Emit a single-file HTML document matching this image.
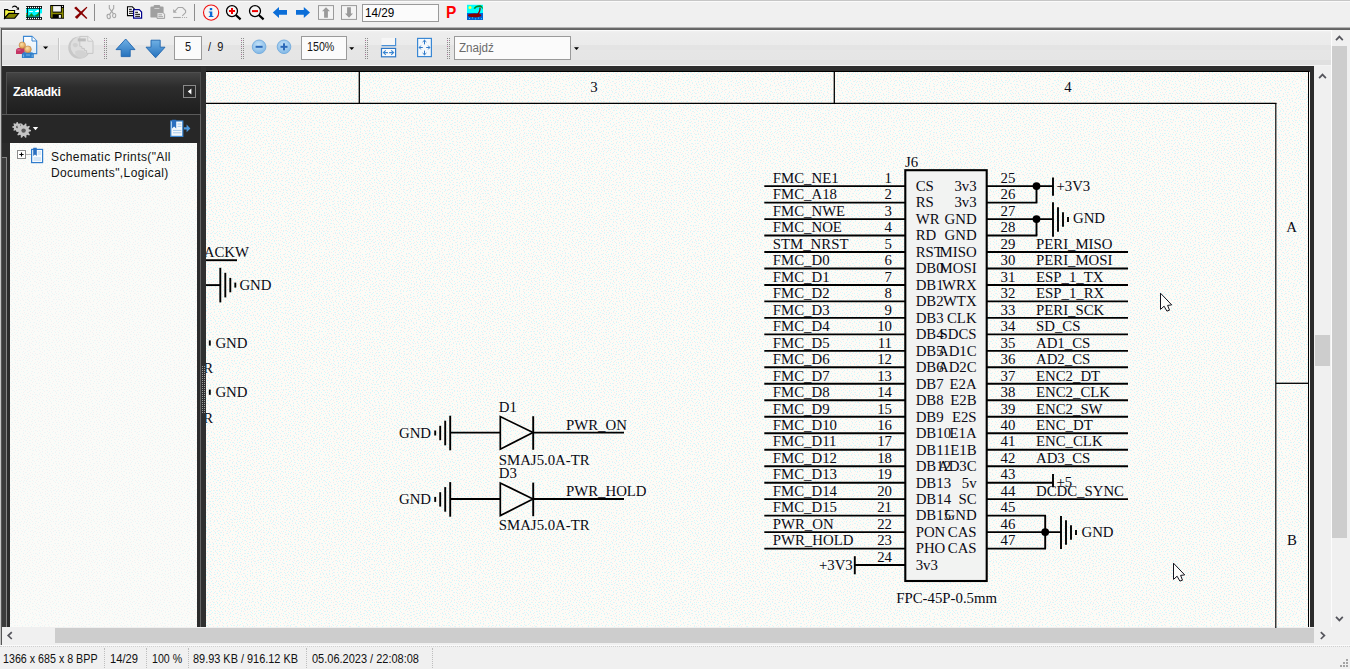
<!DOCTYPE html>
<html lang="pl">
<head>
<meta charset="utf-8">
<title>IrfanView - PDF schematic</title>
<style>
html,body{margin:0;padding:0;}
body{width:1350px;height:669px;overflow:hidden;position:relative;background:#f0f0f0;font-family:"Liberation Sans",sans-serif;}
.abs{position:absolute;}
#tb1{left:0;top:0;width:1350px;height:27px;background:linear-gradient(#c6c6c6 0,#c6c6c6 1px,#fafafa 1px,#fafafa 2px,#f0f0f0 2px);}
#tb1sep{left:0;top:27px;width:1350px;height:3px;background:linear-gradient(#b4b4b4 0,#b4b4b4 30%,#6c6c6c 40%,#606060 100%);}
#tb1sep2{left:2px;top:30px;width:1329px;height:1px;background:#fbfbfb;}
#tb2{left:2px;top:31px;width:1329px;height:35px;background:linear-gradient(#f1f1f1 0px,#ededed 2px,#ebebeb 14px,#e4e4e4 14.5px,#e4e4e4 18.5px,#e6e6e6 19px,#e5e5e5 29px,#e0e0e0 29.5px,#e0e0e0 34px,#f4f4f4 34px,#f4f4f4 35px);}
#lborder{left:0;top:28px;width:2px;height:617px;background:linear-gradient(90deg,#c4c4c4 0,#c4c4c4 50%,#555 50%,#555 100%);}
#dark{left:2px;top:66px;width:1312px;height:561px;background:#2b2b2b;}
#page{left:206px;top:72px;width:1102px;height:555px;background:#f7f9f6;}
#pageedge{left:1308px;top:71px;width:1px;height:556px;background:#000;}
#pageedge2{left:1309px;top:72px;width:1px;height:555px;background:#f4f4f4;}
#pagetop{left:206px;top:71px;width:1103px;height:1px;background:#000;}
/* bookmarks panel */
#bmhead{left:6px;top:72px;width:195px;height:42px;box-sizing:border-box;border:1px solid #4f4f4f;border-bottom:none;background:linear-gradient(#444 0%,#2c2c2c 35%,#1e1e1e 100%);}
#bmtitle{left:13px;top:85px;color:#fff;font-weight:bold;font-size:12.5px;line-height:15px;letter-spacing:-0.3px;}
#bmcollapse{left:183px;top:85px;width:13px;height:13px;box-sizing:border-box;border:1px solid #8a8a8a;background:#2a2a2a;}
#bmtools{left:2px;top:114px;width:199px;height:29px;background:#272727;border-top:1px solid #5a5a5a;box-sizing:border-box;}
#bmtree{left:10px;top:143px;width:187px;height:484px;background:#f8f9f7;}
#bmrline{left:200px;top:114px;width:1px;height:513px;background:#666;}
#bmleftline{left:2px;top:157px;width:4px;height:469px;background:#3b3b3b;border-top:1px solid #858585;border-right:1px solid #858585;}
.tree{color:#111;font-size:12px;line-height:16px;letter-spacing:0.39px;white-space:nowrap;}
/* scrollbars */
#vs_in{left:1314px;top:67px;width:17px;height:560px;background:#f0f0f0;}
#vs_in_thumb{left:1315px;top:335px;width:15px;height:31px;background:#cdcdcd;}
#vs_gap{left:1331px;top:30px;width:1px;height:597px;background:#fcfcfc;}
#vs_out{left:1332px;top:30px;width:18px;height:597px;background:#f0f0f0;}
#vs_out_thumb{left:1332px;top:46px;width:15px;height:492px;background:#cdcdcd;}
#hs{left:2px;top:627px;width:1348px;height:18px;background:#f0f0f0;}
#hs_thumb{left:55px;top:628px;width:1259px;height:15px;background:#cdcdcd;}
/* status */
#status{left:0;top:645px;width:1350px;height:24px;background:#f0f0f0;border-top:1px solid #fafafa;box-sizing:border-box;}
#statusdot{left:0;top:646px;width:1350px;height:0;border-top:1px dotted #cfcfcf;}
.st{position:absolute;transform-origin:0 0;top:651.8px;font-size:12px;line-height:14px;color:#111;white-space:nowrap;}
.ss{position:absolute;top:648px;width:0;height:20px;border-left:1px dotted #bdbdbd;}
.tbox{position:absolute;box-sizing:border-box;background:#fbfbfb;border:1px solid #9a9a9a;}
.t2{position:absolute;font-size:12.5px;color:#151515;line-height:14px;white-space:nowrap;}
</style>
</head>
<body>
<div class="abs" id="tb1"></div>
<div class="abs" id="tb1sep"></div>
<div class="abs" id="tb1sep2"></div>
<div class="abs" id="tb2"></div>
<div class="abs" id="lborder"></div>
<div class="abs" id="dark"></div>
<div class="abs" id="page"></div>
<div class="abs" id="pagetop"></div>
<div class="abs" id="pageedge"></div>
<div class="abs" id="pageedge2"></div>

<!-- bookmarks panel -->
<div class="abs" id="bmhead"></div>
<div class="abs" id="bmtitle">Zakładki</div>
<div class="abs" id="bmcollapse"></div>
<div class="abs" id="bmtools"></div>
<div class="abs" id="bmtree"></div>
<svg class="abs" style="left:0;top:0;" width="1350" height="669" viewBox="0 0 1350 669">
<defs><pattern id="dcy" width="53" height="53" patternUnits="userSpaceOnUse"><path fill="#cefcff" d="M28 35h1v1h-1zM49 29h1v1h-1zM28 32h1v1h-1zM37 12h1v1h-1zM11 51h1v1h-1zM32 30h1v1h-1zM40 39h1v1h-1zM50 11h1v1h-1zM6 28h1v1h-1zM19 9h1v1h-1zM5 34h1v1h-1zM51 44h1v1h-1zM40 2h1v1h-1zM38 25h1v1h-1zM28 41h1v1h-1zM47 39h1v1h-1zM41 10h1v1h-1zM33 4h1v1h-1zM3 2h1v1h-1zM12 15h1v1h-1zM20 28h1v1h-1zM33 14h1v1h-1zM40 18h1v1h-1zM31 0h1v1h-1zM42 5h1v1h-1zM17 26h1v1h-1zM45 16h1v1h-1zM20 48h1v1h-1zM14 32h1v1h-1zM18 1h1v1h-1zM49 6h1v1h-1zM25 6h1v1h-1zM43 0h1v1h-1zM3 30h1v1h-1zM24 45h1v1h-1zM25 26h1v1h-1zM17 21h1v1h-1zM5 19h1v1h-1zM21 0h1v1h-1zM26 48h1v1h-1zM7 8h1v1h-1zM15 45h1v1h-1zM6 0h1v1h-1zM51 31h1v1h-1zM11 43h1v1h-1zM12 46h1v1h-1zM13 0h1v1h-1zM17 51h1v1h-1zM37 19h1v1h-1zM1 13h1v1h-1zM11 25h1v1h-1zM38 41h1v1h-1zM36 6h1v1h-1zM2 9h1v1h-1zM13 28h1v1h-1zM21 18h1v1h-1zM4 5h1v1h-1zM13 37h1v1h-1zM40 15h1v1h-1zM0 38h1v1h-1zM23 23h1v1h-1zM39 29h1v1h-1zM8 37h1v1h-1zM8 24h1v1h-1zM11 40h1v1h-1zM9 19h1v1h-1zM46 12h1v1h-1zM40 35h1v1h-1zM24 30h1v1h-1zM26 3h1v1h-1zM16 15h1v1h-1zM47 45h1v1h-1zM25 16h1v1h-1zM26 52h1v1h-1zM18 33h1v1h-1zM35 41h1v1h-1zM47 1h1v1h-1zM15 3h1v1h-1zM33 36h1v1h-1zM8 5h1v1h-1zM23 8h1v1h-1zM28 21h1v1h-1zM42 46h1v1h-1zM44 33h1v1h-1zM37 2h1v1h-1zM30 4h1v1h-1zM46 19h1v1h-1zM2 47h1v1h-1zM8 50h1v1h-1zM5 43h1v1h-1zM40 7h1v1h-1zM44 37h1v1h-1zM29 28h1v1h-1zM48 32h1v1h-1zM1 19h1v1h-1zM7 31h1v1h-1zM42 31h1v1h-1zM33 10h1v1h-1zM48 21h1v1h-1zM42 28h1v1h-1zM20 25h1v1h-1zM51 48h1v1h-1zM13 8h1v1h-1zM45 4h1v1h-1zM10 7h1v1h-1zM31 43h1v1h-1zM20 45h1v1h-1zM20 4h1v1h-1zM17 36h1v1h-1zM41 50h1v1h-1zM49 17h1v1h-1zM15 49h1v1h-1zM3 40h1v1h-1zM6 40h1v1h-1zM23 4h1v1h-1zM43 12h1v1h-1zM30 16h1v1h-1zM22 34h1v1h-1zM32 39h1v1h-1zM46 24h1v1h-1zM29 12h1v1h-1zM32 50h1v1h-1zM52 21h1v1h-1zM6 46h1v1h-1zM52 51h1v1h-1zM7 13h1v1h-1zM15 24h1v1h-1zM35 26h1v1h-1zM51 2h1v1h-1zM11 34h1v1h-1zM30 9h1v1h-1zM33 46h1v1h-1zM48 14h1v1h-1zM46 35h1v1h-1zM35 16h1v1h-1zM19 42h1v1h-1zM24 39h1v1h-1zM13 19h1v1h-1zM36 31h1v1h-1zM1 34h1v1h-1zM25 34h1v1h-1zM51 36h1v1h-1zM33 20h1v1h-1zM1 16h1v1h-1zM8 44h1v1h-1zM15 39h1v1h-1zM1 24h1v1h-1zM22 11h1v1h-1zM20 38h1v1h-1zM5 16h1v1h-1zM45 8h1v1h-1zM40 43h1v1h-1zM39 32h1v1h-1zM13 11h1v1h-1zM17 7h1v1h-1zM23 49h1v1h-1zM11 4h1v1h-1zM42 25h1v1h-1zM51 41h1v1h-1zM10 31h1v1h-1zM18 30h1v1h-1zM1 0h1v1h-1zM3 37h1v1h-1zM4 51h1v1h-1zM46 30h1v1h-1zM38 45h1v1h-1zM52 8h1v1h-1zM39 22h1v1h-1zM21 21h1v1h-1zM35 48h1v1h-1zM36 36h1v1h-1zM22 42h1v1h-1zM20 14h1v1h-1zM5 23h1v1h-1zM36 23h1v1h-1zM51 24h1v1h-1zM17 47h1v1h-1zM29 25h1v1h-1zM42 22h1v1h-1zM33 23h1v1h-1zM9 15h1v1h-1zM30 19h1v1h-1zM11 22h1v1h-1zM25 11h1v1h-1zM28 50h1v1h-1zM47 50h1v1h-1zM16 12h1v1h-1zM30 46h1v1h-1zM15 42h1v1h-1zM38 9h1v1h-1zM10 11h1v1h-1zM48 42h1v1h-1zM33 33h1v1h-1zM9 2h1v1h-1zM1 4h1v1h-1zM2 44h1v1h-1zM44 42h1v1h-1zM38 50h1v1h-1zM9 47h1v1h-1zM45 48h1v1h-1zM35 51h1v1h-1zM24 20h1v1h-1zM4 13h1v1h-1zM35 44h1v1h-1zM51 27h1v1h-1zM26 23h1v1h-1zM28 7h1v1h-1zM26 37h1v1h-1zM2 27h1v1h-1zM27 44h1v1h-1zM21 31h1v1h-1zM9 28h1v1h-1zM18 18h1v1h-1zM7 21h1v1h-1zM47 27h1v1h-1zM51 14h1v1h-1zM29 38h1v1h-1zM32 26h1v1h-1zM8 34h1v1h-1zM43 19h1v1h-1zM0 29h1v1h-1zM34 1h1v1h-1zM49 52h1v1h-1zM25 42h1v1h-1zM24 1h1v1h-1zM27 14h1v1h-1zM48 9h1v1h-1zM23 14h1v1h-1zM33 7h1v1h-1zM5 10h1v1h-1zM28 1h1v1h-1zM6 3h1v1h-1zM27 18h1v1h-1zM3 21h1v1h-1z"/></pattern><pattern id="dgr" width="41" height="41" patternUnits="userSpaceOnUse"><path fill="#efedf0" d="M40 23h1v1h-1zM20 16h1v1h-1zM14 31h1v1h-1zM4 9h1v1h-1zM8 19h1v1h-1zM4 2h1v1h-1zM23 23h1v1h-1zM4 13h1v1h-1zM35 20h1v1h-1zM1 20h1v1h-1zM19 30h1v1h-1zM32 25h1v1h-1zM6 39h1v1h-1zM24 6h1v1h-1zM23 34h1v1h-1zM5 15h1v1h-1zM23 31h1v1h-1zM30 24h1v1h-1zM40 1h1v1h-1zM12 36h1v1h-1zM2 31h1v1h-1zM25 27h1v1h-1zM20 36h1v1h-1zM8 3h1v1h-1zM14 1h1v1h-1zM32 29h1v1h-1zM11 2h1v1h-1zM24 17h1v1h-1zM27 12h1v1h-1zM40 36h1v1h-1zM32 6h1v1h-1zM38 30h1v1h-1zM8 11h1v1h-1zM21 0h1v1h-1zM5 18h1v1h-1zM21 8h1v1h-1zM30 35h1v1h-1zM15 18h1v1h-1zM15 6h1v1h-1zM34 10h1v1h-1zM31 11h1v1h-1zM25 38h1v1h-1zM7 27h1v1h-1zM35 31h1v1h-1zM5 28h1v1h-1zM38 10h1v1h-1zM37 8h1v1h-1zM27 32h1v1h-1zM30 19h1v1h-1zM12 21h1v1h-1zM20 5h1v1h-1zM33 40h1v1h-1zM29 17h1v1h-1zM12 39h1v1h-1zM17 38h1v1h-1zM27 23h1v1h-1zM28 26h1v1h-1zM14 10h1v1h-1zM18 17h1v1h-1zM3 22h1v1h-1zM15 34h1v1h-1zM40 11h1v1h-1zM37 33h1v1h-1zM26 34h1v1h-1zM0 16h1v1h-1zM3 26h1v1h-1zM27 28h1v1h-1zM29 7h1v1h-1zM29 30h1v1h-1zM8 30h1v1h-1zM32 2h1v1h-1zM7 13h1v1h-1zM38 37h1v1h-1zM18 12h1v1h-1zM33 17h1v1h-1zM36 14h1v1h-1zM10 37h1v1h-1zM17 7h1v1h-1zM16 21h1v1h-1zM29 33h1v1h-1zM6 36h1v1h-1zM6 4h1v1h-1zM11 6h1v1h-1zM27 1h1v1h-1zM1 34h1v1h-1zM3 6h1v1h-1zM23 20h1v1h-1zM4 37h1v1h-1zM23 2h1v1h-1zM14 16h1v1h-1zM9 24h1v1h-1zM24 29h1v1h-1zM38 3h1v1h-1zM39 14h1v1h-1zM11 27h1v1h-1zM9 39h1v1h-1zM25 15h1v1h-1zM0 8h1v1h-1zM13 7h1v1h-1zM34 27h1v1h-1zM0 32h1v1h-1zM17 10h1v1h-1zM19 20h1v1h-1zM6 33h1v1h-1zM34 3h1v1h-1zM35 16h1v1h-1zM27 8h1v1h-1zM20 32h1v1h-1zM36 36h1v1h-1zM10 8h1v1h-1zM31 4h1v1h-1zM40 28h1v1h-1zM26 30h1v1h-1zM36 29h1v1h-1zM6 25h1v1h-1zM15 29h1v1h-1zM35 25h1v1h-1zM23 13h1v1h-1zM2 18h1v1h-1zM2 14h1v1h-1zM32 38h1v1h-1zM17 27h1v1h-1zM10 17h1v1h-1zM29 14h1v1h-1zM16 14h1v1h-1zM36 0h1v1h-1zM39 25h1v1h-1zM19 24h1v1h-1zM28 36h1v1h-1zM31 21h1v1h-1zM22 39h1v1h-1zM39 17h1v1h-1zM39 34h1v1h-1zM11 19h1v1h-1zM34 35h1v1h-1zM39 40h1v1h-1zM27 16h1v1h-1zM34 23h1v1h-1zM35 39h1v1h-1zM30 27h1v1h-1zM32 32h1v1h-1zM17 35h1v1h-1zM8 15h1v1h-1zM11 14h1v1h-1zM23 37h1v1h-1zM18 40h1v1h-1zM32 13h1v1h-1zM20 13h1v1h-1zM22 11h1v1h-1zM10 34h1v1h-1zM14 4h1v1h-1zM27 19h1v1h-1zM24 25h1v1h-1zM18 2h1v1h-1zM1 0h1v1h-1zM21 18h1v1h-1zM39 20h1v1h-1zM17 32h1v1h-1zM14 22h1v1h-1zM8 22h1v1h-1zM15 24h1v1h-1zM32 9h1v1h-1zM39 7h1v1h-1zM7 9h1v1h-1zM35 12h1v1h-1zM15 12h1v1h-1zM12 12h1v1h-1zM6 1h1v1h-1zM0 3h1v1h-1zM14 26h1v1h-1zM12 29h1v1h-1zM0 26h1v1h-1zM14 38h1v1h-1zM7 6h1v1h-1zM25 9h1v1h-1zM15 40h1v1h-1zM4 40h1v1h-1zM25 21h1v1h-1zM1 10h1v1h-1zM1 38h1v1h-1zM30 39h1v1h-1zM37 21h1v1h-1zM28 10h1v1h-1zM29 22h1v1h-1zM5 31h1v1h-1zM27 4h1v1h-1zM17 4h1v1h-1zM3 11h1v1h-1zM1 5h1v1h-1zM10 4h1v1h-1zM21 29h1v1h-1zM24 40h1v1h-1zM9 32h1v1h-1zM3 35h1v1h-1zM37 26h1v1h-1zM31 15h1v1h-1zM10 0h1v1h-1zM1 24h1v1h-1zM6 21h1v1h-1zM22 26h1v1h-1zM9 28h1v1h-1z"/></pattern></defs>
<rect x="206" y="72" width="1102" height="555" fill="#fdfbf6"/><rect x="206" y="72" width="1102" height="555" fill="url(#dgr)"/><rect x="206" y="72" width="1102" height="555" fill="url(#dcy)"/>
<rect x="10" y="143" width="187" height="484" fill="#fbfbf8"/><rect x="10" y="143" width="187" height="484" fill="url(#dgr)" opacity="0.7"/><rect x="10" y="143" width="187" height="484" fill="url(#dcy)" opacity="0.35"/>

</svg>
<div class="abs" id="bmleftline"></div>
<div class="abs" id="bmrline"></div>
<div class="abs tree" style="left:51px;top:149px;">Schematic Prints("All<br>Documents",Logical)</div>

<!-- scrollbars -->
<div class="abs" id="vs_in"></div>
<div class="abs" id="vs_in_thumb"></div>
<div class="abs" id="vs_gap"></div>
<div class="abs" id="vs_out"></div>
<div class="abs" id="vs_out_thumb"></div>
<div class="abs" id="hs"></div>
<div class="abs" id="hs_thumb"></div>

<!-- status bar -->
<div class="abs" id="status"></div>
<div class="abs" id="statusdot"></div>
<div class="st" style="left:3px;transform:scaleX(0.891);">1366 x 685 x 8 BPP</div>
<div class="st" style="left:110px;transform:scaleX(0.933);">14/29</div>
<div class="st" style="left:151.5px;transform:scaleX(0.885);">100 %</div>
<div class="st" style="left:193px;transform:scaleX(0.91);">89.93 KB / 916.12 KB</div>
<div class="st" style="left:312px;transform:scaleX(0.916);">05.06.2023 / 22:08:08</div>
<div class="ss" style="left:104px;"></div>
<div class="ss" style="left:146px;"></div>
<div class="ss" style="left:188px;"></div>
<div class="ss" style="left:306px;"></div>
<div class="ss" style="left:432px;"></div>

<!-- toolbar 1 text widgets -->
<div class="tbox" style="left:362px;top:4px;width:77px;height:18px;"></div>
<div class="t2" style="left:365.4px;top:6px;font-size:13px;color:#000;transform:scaleX(0.9);transform-origin:0 0;">14/29</div>
<div class="abs" style="left:446.2px;top:4px;font-size:16.6px;line-height:18px;font-weight:bold;color:#ff0000;transform:scaleX(0.93);transform-origin:0 0;">P</div>

<!-- toolbar 2 text widgets -->
<div class="tbox" style="left:174px;top:36px;width:28px;height:24px;"></div>
<div class="t2" style="left:185.4px;top:39.8px;transform:scaleX(0.88);transform-origin:0 0;">5</div>
<div class="t2" style="left:208px;top:39.8px;transform:scaleX(0.88);transform-origin:0 0;">/&nbsp;&nbsp;9</div>
<div class="tbox" style="left:301px;top:36px;width:46px;height:24px;"></div>
<div class="t2" style="left:307.4px;top:39.6px;transform:scaleX(0.855);transform-origin:0 0;">150%</div>
<div class="tbox" style="left:454px;top:36px;width:117px;height:24px;"></div>
<div class="t2" style="left:459.2px;top:41px;color:#6a6a6a;transform:scaleX(0.93);transform-origin:0 0;">Znajdź</div>

<!-- main overlay svg: icons + schematic -->
<svg class="abs" style="left:0;top:0;" width="1350" height="669" viewBox="0 0 1350 669">
<g id="icons" shape-rendering="auto">
<!-- ===== toolbar 1 ===== -->
<!-- open folder -->
<g>
<path d="M4.6 9.6 L7.6 9.6 L8.5 10.5 L14.6 10.5 L14.6 13.4 L8.9 13.4 L4.6 18.2 Z" fill="#f6f640" stroke="#000" stroke-width="1.1" stroke-linejoin="miter"/>
<path d="M8.9 13.5 L18.5 13.5 L14.7 18.2 L4.7 18.2 Z" fill="#848400" stroke="#000" stroke-width="1.1" stroke-linejoin="miter"/>
<path d="M12.3 7.5 C13.2 5.8 15.8 5.4 17.6 8.2" fill="none" stroke="#000" stroke-width="1.1"/>
<path d="M18.9 6.9 L19.1 9.8 L16.2 9.6 Z" fill="#000"/>
</g>
<!-- film strip -->
<g>
<rect x="26" y="6" width="16" height="13.8" fill="#000"/>
<rect x="26" y="8.7" width="1.1" height="8.4" fill="#00f4fa"/>
<rect x="26" y="13" width="1.1" height="0.8" fill="#f01010"/><rect x="26" y="13.8" width="1.1" height="0.7" fill="#f4f000"/><rect x="26" y="14.5" width="1.1" height="2" fill="#109020"/>
<rect x="27.9" y="8.7" width="11.2" height="8.4" fill="#00f4fa"/>
<rect x="39.9" y="8.7" width="2.1" height="8.4" fill="#00f4fa"/>
<rect x="40.2" y="13.4" width="1.8" height="3.6" fill="#f2f2f2"/>
<rect x="27.9" y="15.4" width="11.2" height="1.7" fill="#1088a8"/>
<path d="M28 16.6 L29.4 15.6 L31.5 12.9 L33.4 15.4 L34 16.6 Z" fill="#108a20"/>
<path d="M35 16.2 L36 14.6 L37 14.6 L38.6 12.2 L39.1 12.6 L39.1 15 L37.6 16.4 Z" fill="#108a20"/>
<rect x="29.1" y="11" width="3.8" height="0.9" fill="#fff"/>
<path d="M35.2 11 L36.4 11 L36.8 10 L38.8 10 L38.8 12 L37.4 12 L37 11.9 L35.2 11.9 Z" fill="#fff"/>
<g fill="#fff"><rect x="26.0" y="6.8" width="1.1" height="1.2"/><rect x="28.0" y="6.8" width="1.1" height="1.2"/><rect x="30.0" y="6.8" width="1.1" height="1.2"/><rect x="32.0" y="6.8" width="1.1" height="1.2"/><rect x="34.0" y="6.8" width="1.1" height="1.2"/><rect x="36.0" y="6.8" width="1.1" height="1.2"/><rect x="38.0" y="6.8" width="1.1" height="1.2"/><rect x="40.0" y="6.8" width="1.1" height="1.2"/><rect x="26.0" y="17.9" width="1.1" height="1.2"/><rect x="28.0" y="17.9" width="1.1" height="1.2"/><rect x="30.0" y="17.9" width="1.1" height="1.2"/><rect x="32.0" y="17.9" width="1.1" height="1.2"/><rect x="34.0" y="17.9" width="1.1" height="1.2"/><rect x="36.0" y="17.9" width="1.1" height="1.2"/><rect x="38.0" y="17.9" width="1.1" height="1.2"/><rect x="40.0" y="17.9" width="1.1" height="1.2"/></g>
</g>
<!-- save floppy -->
<g>
<path d="M50.2 5.1 H64 V18.7 H51.2 L50.2 17.7 Z" fill="#000"/>
<rect x="51.1" y="6" width="1.5" height="11.6" fill="#8a8a00"/>
<rect x="61.8" y="8" width="1.5" height="9.7" fill="#8a8a00"/>
<rect x="51.1" y="12.6" width="12.2" height="1.6" fill="#8a8a00"/>
<rect x="62.6" y="14.2" width="0.7" height="3.5" fill="#8a8a00"/>
<rect x="53.1" y="6.1" width="7.8" height="5.5" fill="#f4f4f4"/>
<rect x="58.8" y="15" width="2.1" height="2.8" fill="#f4f4f4"/>
<rect x="62" y="5.9" width="1" height="1" fill="#fff"/>
</g>
<!-- red X -->
<g fill="#880000">
<path d="M74.1 8.1 L76.1 6.5 L87.3 18.1 L86.4 19 Z"/>
<path d="M86.6 6.7 L87.4 7.5 L77 19.1 L74.8 17.1 Z"/>
</g>
<rect x="94" y="4" width="1" height="17" fill="#8c8c8c"/>
<!-- scissors (disabled) -->
<g stroke="#a6a6a6" stroke-width="1.1" fill="none">
<path d="M109.3 5 L109.3 8.4 L113.4 13.6"/>
<path d="M113.7 5 L113.7 8.4 L109.6 14.4"/>
<ellipse cx="108.7" cy="16.5" rx="1.6" ry="2.2" transform="rotate(-12 108.7 16.5)"/>
<ellipse cx="114.2" cy="15.6" rx="1.6" ry="2.1" transform="rotate(8 114.2 15.6)"/>
</g>
<!-- copy -->
<g>
<path d="M127.5 6.8 L132.3 6.8 L134.4 8.9 L134.4 15.6 L127.5 15.6 Z" fill="#fff" stroke="#000" stroke-width="1.1"/>
<path d="M129 9.3 H131.8 M129 11.3 H133 M129 13.3 H133" stroke="#000" stroke-width="1"/>
<path d="M133.6 9.6 L139.2 9.6 L141.6 12 L141.6 18.2 L133.6 18.2 Z" fill="#fff" stroke="#00008b" stroke-width="1.2"/>
<path d="M135.2 12.3 H138 M135.2 14.3 H140 M135.2 16.3 H140" stroke="#000" stroke-width="1"/>
</g>
<!-- paste (disabled) -->
<g>
<rect x="150.4" y="6.6" width="13.2" height="11" rx="1.2" fill="#a0a0a0"/>
<rect x="153.6" y="5" width="6.6" height="3" rx="1" fill="#a0a0a0"/>
<rect x="154.4" y="8" width="5" height="0.9" fill="#d8d8d8"/>
<path d="M157 12.6 L163 12.6 L164.6 14.2 L164.6 18.4 L157 18.4 Z" fill="#e8e8e8" stroke="#a0a0a0" stroke-width="1"/>
<path d="M158.4 14.8 H162 M158.4 16.6 H163" stroke="#a0a0a0" stroke-width="0.9"/>
</g>
<!-- undo (disabled) -->
<g stroke="#a6a6a6" fill="none" stroke-width="1.1">
<path d="M175.2 10.9 L178.2 7.5 L182.6 7.5 L185.6 10.5 L185.6 12.6 L182.3 15.8"/>
<path d="M173.2 17.5 H180.8"/>
<path d="M173.2 9.1 L173.2 12.8 L176.9 12.8 Z" fill="#a6a6a6" stroke="none"/>
</g>
<g fill="#a6a6a6"><rect x="181.9" y="17" width="1" height="1"/><rect x="184.1" y="17" width="1" height="1"/><rect x="186.1" y="17" width="1" height="1"/></g>
<rect x="194" y="4" width="1" height="17" fill="#8c8c8c"/>
<!-- info -->
<circle cx="211.1" cy="12.6" r="7.6" fill="#f6f6f6" stroke="#f01010" stroke-width="1.1"/>
<g fill="#0b6ad6"><rect x="209.8" y="8" width="2.4" height="2.2"/><path d="M208.8 11.4 H212.3 V16 H213.4 V17 H208.8 V16 H209.9 V12.4 H208.8 Z"/></g>
<!-- zoom in -->
<g>
<circle cx="232" cy="11.1" r="5.5" fill="#f6f6f6" stroke="#000" stroke-width="1.3"/>
<path d="M235.8 15 L240.6 19.4" stroke="#000" stroke-width="2.2"/>
<path d="M229 11.1 H235 M232 8.1 V14.1" stroke="#f00000" stroke-width="2"/>
</g>
<!-- zoom out -->
<g>
<circle cx="255" cy="11.1" r="5.5" fill="#f6f6f6" stroke="#000" stroke-width="1.3"/>
<path d="M258.8 15 L263.6 19.4" stroke="#000" stroke-width="2.2"/>
<path d="M252 11.1 H258" stroke="#f00000" stroke-width="2"/>
</g>
<!-- left/right arrows -->
<path d="M272.8 12.5 L279 7 L279 10 L287 10 L287 14.8 L279 14.8 L279 18 Z" fill="#0b6ed8"/>
<path d="M310 12.5 L303.8 7 L303.8 10 L296 10 L296 14.8 L303.8 14.8 L303.8 18 Z" fill="#0b6ed8"/>
<!-- up/down disabled buttons -->
<rect x="318.5" y="5.6" width="15" height="13.8" fill="#f4f4f4" stroke="#9a9a9a" stroke-width="1"/>
<path d="M326 7.2 L330 11.2 L327.9 11.2 L327.9 17.8 L324.1 17.8 L324.1 11.2 L322 11.2 Z" fill="#9a9a9a"/>
<rect x="341.5" y="5.6" width="15" height="13.8" fill="#f4f4f4" stroke="#9a9a9a" stroke-width="1"/>
<path d="M349 17.8 L353 13.6 L350.9 13.6 L350.9 7.2 L347.1 7.2 L347.1 13.6 L345 13.6 Z" fill="#9a9a9a"/>
<!-- island icon -->
<g>
<rect x="467" y="4.8" width="16" height="8.2" fill="#00ffff"/>
<rect x="467" y="13" width="16" height="7" fill="#0060d8"/>
<circle cx="470" cy="7.4" r="1.5" fill="#ffff30"/>
<ellipse cx="474.6" cy="15.4" rx="6.8" ry="1.9" fill="#8b0000"/>
<path d="M476.6 14.4 C478.6 12.4 479.6 10 479.4 7.4 L480.6 7.6 C481 10.4 479.8 13 478.4 14.8 Z" fill="#8b0000"/>
<path d="M473.6 8.4 C475 6 478 4.8 481 5.4 C482.6 6 483 8 482.8 9.4 C482 7.6 480.8 7 479.4 7 C477.6 6.8 475.6 7.6 475.2 9 Z" fill="#0a8a20"/>
<g fill="#30e0ff"><rect x="469" y="18" width="1" height="1"/><rect x="472" y="17.4" width="1" height="1"/><rect x="475" y="18.4" width="1" height="1"/><rect x="478" y="17.6" width="1" height="1"/><rect x="481" y="18.2" width="1" height="1"/></g>
</g>
</g>
<defs>
<linearGradient id="gblue" x1="0" y1="0" x2="0" y2="1"><stop offset="0" stop-color="#6fb0e4"/><stop offset="1" stop-color="#2672bd"/></linearGradient>
<radialGradient id="gball" cx="0.45" cy="0.35" r="0.7"><stop offset="0" stop-color="#c4e2f8"/><stop offset="1" stop-color="#7cb4e4"/></radialGradient>
<radialGradient id="ghead" cx="0.4" cy="0.35" r="0.7"><stop offset="0" stop-color="#fbe0a8"/><stop offset="1" stop-color="#e09a48"/></radialGradient>
<linearGradient id="gdoc" x1="0" y1="0" x2="0" y2="1"><stop offset="0" stop-color="#ffffff"/><stop offset="1" stop-color="#dcecf8"/></linearGradient>
<linearGradient id="gband" x1="0" y1="0" x2="0" y2="1"><stop offset="0" stop-color="#b8b8b8"/><stop offset="0.4" stop-color="#747474"/><stop offset="1" stop-color="#5c5c5c"/></linearGradient>
</defs>
<g id="icons2">
<!-- people + document -->
<g>
<path d="M23.5 36.4 L32 36.4 L36.7 41 L36.7 53.6 L23.5 53.6 Z" fill="url(#gdoc)" stroke="#3a86d2" stroke-width="1.1"/>
<path d="M32 36.6 L32 41 L36.5 41" fill="#fafcfe" stroke="#3a86d2" stroke-width="1"/>
<path d="M16 54 L16 50.4 C16 48.6 18 48 19.6 48 L24.6 48 L24.8 54 Z" fill="#c43664"/>
<path d="M17.4 50 H20.4" stroke="#e896b0" stroke-width="0.8"/>
<circle cx="22.3" cy="45.2" r="3.2" fill="url(#ghead)" stroke="#b88040" stroke-width="0.6"/>
<path d="M21.9 58 L21.9 54.6 C21.9 52.8 23.6 52.3 25 52.3 L31 52.3 C32.6 52.3 33.8 53 33.8 54.6 L33.8 58 Z" fill="#2f7fca"/>
<path d="M23.6 54.6 V57.2 M26 55 H30 M32.2 54.6 V57.2" stroke="#8cc0ec" stroke-width="0.8" fill="none"/>
<circle cx="27.9" cy="49.3" r="3.4" fill="url(#ghead)" stroke="#b88040" stroke-width="0.6"/>
</g>
<path d="M43 46.4 L48.2 46.4 L45.6 49.2 Z" fill="#000"/>
<rect x="58" y="38" width="1" height="22" fill="#c6c6c6"/><rect x="59" y="38" width="1" height="22" fill="#f6f6f6"/>
<!-- disabled globe + doc -->
<g>
<circle cx="79.4" cy="47.6" r="11.2" fill="#c8c8c8"/>
<circle cx="80.6" cy="46.6" r="10" fill="#dedede"/>
<path d="M72.6 44.4 C74 42.6 76.4 42.6 77.6 44 C78.4 45.4 77.6 46.8 76 47.2 C74.2 47.4 72.8 46.4 72.6 44.4 Z" fill="#d0d0d0"/>
<path d="M75 51.4 L78 50.2 L82.6 50.4 L85.8 52.4 L86.4 55.4 L83 58 L78.4 57.6 L75.6 55 Z" fill="#d2d2d2"/>
<path d="M79.8 36.4 L87.8 36.4 L93 41.2 L93 53.4 L86.6 53.4 L86.6 50.6 L84.4 50.6 L84.4 48.4 L81.8 48.4 L81.8 46.4 L79.8 46.4 Z" fill="#e6e6e6" stroke="#c6c6c6" stroke-width="1"/>
<path d="M87.8 36.6 L87.8 41.2 L92.8 41.2" fill="#eeeeee" stroke="#c6c6c6" stroke-width="0.9"/>
<rect x="77.8" y="38.4" width="8" height="3" fill="#bdbdbd"/>
</g>
<!-- grips -->
<g>
<rect x="104" y="38" width="1" height="1" fill="#8c8c8c"/>
<rect x="104" y="40" width="1" height="1" fill="#b0709c"/>
<rect x="104" y="42" width="1" height="1" fill="#8c8c8c"/>
<rect x="104" y="44" width="1" height="1" fill="#8c8c8c"/>
<rect x="104" y="46" width="1" height="1" fill="#b0709c"/>
<rect x="104" y="48" width="1" height="1" fill="#8c8c8c"/>
<rect x="104" y="50" width="1" height="1" fill="#8c8c8c"/>
<rect x="104" y="52" width="1" height="1" fill="#8c8c8c"/>
<rect x="104" y="54" width="1" height="1" fill="#b0709c"/>
<rect x="104" y="56" width="1" height="1" fill="#8c8c8c"/>
<rect x="104" y="58" width="1" height="1" fill="#8c8c8c"/>
<rect x="106" y="38" width="1" height="1" fill="#8c8c8c"/>
<rect x="106" y="40" width="1" height="1" fill="#8c8c8c"/>
<rect x="106" y="42" width="1" height="1" fill="#8c8c8c"/>
<rect x="106" y="44" width="1" height="1" fill="#8c8c8c"/>
<rect x="106" y="46" width="1" height="1" fill="#8c8c8c"/>
<rect x="106" y="48" width="1" height="1" fill="#8c8c8c"/>
<rect x="106" y="50" width="1" height="1" fill="#8c8c8c"/>
<rect x="106" y="52" width="1" height="1" fill="#8c8c8c"/>
<rect x="106" y="54" width="1" height="1" fill="#8c8c8c"/>
<rect x="106" y="56" width="1" height="1" fill="#8c8c8c"/>
<rect x="106" y="58" width="1" height="1" fill="#8c8c8c"/>
<rect x="241" y="38" width="1" height="1" fill="#8c8c8c"/>
<rect x="241" y="40" width="1" height="1" fill="#b0709c"/>
<rect x="241" y="42" width="1" height="1" fill="#8c8c8c"/>
<rect x="241" y="44" width="1" height="1" fill="#8c8c8c"/>
<rect x="241" y="46" width="1" height="1" fill="#b0709c"/>
<rect x="241" y="48" width="1" height="1" fill="#8c8c8c"/>
<rect x="241" y="50" width="1" height="1" fill="#8c8c8c"/>
<rect x="241" y="52" width="1" height="1" fill="#8c8c8c"/>
<rect x="241" y="54" width="1" height="1" fill="#b0709c"/>
<rect x="241" y="56" width="1" height="1" fill="#8c8c8c"/>
<rect x="241" y="58" width="1" height="1" fill="#8c8c8c"/>
<rect x="243" y="38" width="1" height="1" fill="#8c8c8c"/>
<rect x="243" y="40" width="1" height="1" fill="#8c8c8c"/>
<rect x="243" y="42" width="1" height="1" fill="#8c8c8c"/>
<rect x="243" y="44" width="1" height="1" fill="#8c8c8c"/>
<rect x="243" y="46" width="1" height="1" fill="#8c8c8c"/>
<rect x="243" y="48" width="1" height="1" fill="#8c8c8c"/>
<rect x="243" y="50" width="1" height="1" fill="#8c8c8c"/>
<rect x="243" y="52" width="1" height="1" fill="#8c8c8c"/>
<rect x="243" y="54" width="1" height="1" fill="#8c8c8c"/>
<rect x="243" y="56" width="1" height="1" fill="#8c8c8c"/>
<rect x="243" y="58" width="1" height="1" fill="#8c8c8c"/>
<rect x="365" y="38" width="1" height="1" fill="#8c8c8c"/>
<rect x="365" y="40" width="1" height="1" fill="#b0709c"/>
<rect x="365" y="42" width="1" height="1" fill="#8c8c8c"/>
<rect x="365" y="44" width="1" height="1" fill="#8c8c8c"/>
<rect x="365" y="46" width="1" height="1" fill="#b0709c"/>
<rect x="365" y="48" width="1" height="1" fill="#8c8c8c"/>
<rect x="365" y="50" width="1" height="1" fill="#8c8c8c"/>
<rect x="365" y="52" width="1" height="1" fill="#8c8c8c"/>
<rect x="365" y="54" width="1" height="1" fill="#b0709c"/>
<rect x="365" y="56" width="1" height="1" fill="#8c8c8c"/>
<rect x="365" y="58" width="1" height="1" fill="#8c8c8c"/>
<rect x="367" y="38" width="1" height="1" fill="#8c8c8c"/>
<rect x="367" y="40" width="1" height="1" fill="#8c8c8c"/>
<rect x="367" y="42" width="1" height="1" fill="#8c8c8c"/>
<rect x="367" y="44" width="1" height="1" fill="#8c8c8c"/>
<rect x="367" y="46" width="1" height="1" fill="#8c8c8c"/>
<rect x="367" y="48" width="1" height="1" fill="#8c8c8c"/>
<rect x="367" y="50" width="1" height="1" fill="#8c8c8c"/>
<rect x="367" y="52" width="1" height="1" fill="#8c8c8c"/>
<rect x="367" y="54" width="1" height="1" fill="#8c8c8c"/>
<rect x="367" y="56" width="1" height="1" fill="#8c8c8c"/>
<rect x="367" y="58" width="1" height="1" fill="#8c8c8c"/>
<rect x="447" y="38" width="1" height="1" fill="#8c8c8c"/>
<rect x="447" y="40" width="1" height="1" fill="#b0709c"/>
<rect x="447" y="42" width="1" height="1" fill="#8c8c8c"/>
<rect x="447" y="44" width="1" height="1" fill="#8c8c8c"/>
<rect x="447" y="46" width="1" height="1" fill="#b0709c"/>
<rect x="447" y="48" width="1" height="1" fill="#8c8c8c"/>
<rect x="447" y="50" width="1" height="1" fill="#8c8c8c"/>
<rect x="447" y="52" width="1" height="1" fill="#8c8c8c"/>
<rect x="447" y="54" width="1" height="1" fill="#b0709c"/>
<rect x="447" y="56" width="1" height="1" fill="#8c8c8c"/>
<rect x="447" y="58" width="1" height="1" fill="#8c8c8c"/>
<rect x="449" y="38" width="1" height="1" fill="#8c8c8c"/>
<rect x="449" y="40" width="1" height="1" fill="#8c8c8c"/>
<rect x="449" y="42" width="1" height="1" fill="#8c8c8c"/>
<rect x="449" y="44" width="1" height="1" fill="#8c8c8c"/>
<rect x="449" y="46" width="1" height="1" fill="#8c8c8c"/>
<rect x="449" y="48" width="1" height="1" fill="#8c8c8c"/>
<rect x="449" y="50" width="1" height="1" fill="#8c8c8c"/>
<rect x="449" y="52" width="1" height="1" fill="#8c8c8c"/>
<rect x="449" y="54" width="1" height="1" fill="#8c8c8c"/>
<rect x="449" y="56" width="1" height="1" fill="#8c8c8c"/>
<rect x="449" y="58" width="1" height="1" fill="#8c8c8c"/>
</g>
<!-- up / down arrows -->
<path d="M125.7 39 L135 49.6 L130.2 49.6 L130.2 56.6 L121.2 56.6 L121.2 49.6 L116 49.6 Z" fill="url(#gblue)" stroke="#1f64ae" stroke-width="0.9" stroke-linejoin="round"/>
<path d="M155.6 57.8 L165 47.2 L160.2 47.2 L160.2 40.2 L151 40.2 L151 47.2 L146 47.2 Z" fill="url(#gblue)" stroke="#1f64ae" stroke-width="0.9" stroke-linejoin="round"/>
<!-- zoom - / + -->
<circle cx="259.1" cy="46.8" r="6.8" fill="url(#gball)" stroke="#78aede" stroke-width="1"/>
<rect x="255.6" y="45.8" width="7" height="2" fill="#2a68b8"/>
<circle cx="284" cy="46.8" r="6.8" fill="url(#gball)" stroke="#78aede" stroke-width="1"/>
<rect x="280.5" y="45.8" width="7" height="2" fill="#2a68b8"/><rect x="283" y="43.3" width="2" height="7" fill="#2a68b8"/>
<path d="M349.2 47.2 L354.2 47.2 L351.7 49.9 Z" fill="#000"/>
<path d="M574 47.2 L579 47.2 L576.5 49.9 Z" fill="#000"/>
<!-- fit width -->
<g>
<path d="M381.5 37.8 L395.6 37.8 L395.6 45.6 L381.5 45.6 Z" fill="#f6f6f6"/>
<path d="M381.5 45.6 L395.6 45.6 L395.6 38" fill="none" stroke="#4a90d6" stroke-width="1.2"/>
<rect x="381.5" y="48.4" width="14.1" height="8.4" fill="#fbfbfb" stroke="#2e78c8" stroke-width="1.2"/>
<path d="M383.4 52.6 H393.6 M385.8 50.4 L383.4 52.6 L385.8 54.8 M391.2 50.4 L393.6 52.6 L391.2 54.8" fill="none" stroke="#3a86d2" stroke-width="1.1"/>
<rect x="387.9" y="51.6" width="1.2" height="2" fill="#fbfbfb"/>
</g>
<!-- fit page -->
<g>
<rect x="417.6" y="38.4" width="13.8" height="18.2" fill="#f4f8fc" stroke="#3a88d4" stroke-width="1.2"/>
<path d="M424.5 40.2 V44.4 M422.6 42 L424.5 40.2 L426.4 42 M424.5 54.8 V50.6 M422.6 53 L424.5 54.8 L426.4 53 M419.2 47.5 H422.8 M420.8 45.6 L419.2 47.5 L420.8 49.4 M429.8 47.5 H426.2 M428.2 45.6 L429.8 47.5 L428.2 49.4" fill="none" stroke="#2e78c8" stroke-width="1"/>
</g>
<!-- ===== bookmarks panel icons ===== -->
<path d="M191.4 88.6 L191.4 94.4 L187.8 91.5 Z" fill="#fff"/>
<!-- gears -->
<g fill="#c4c4c4">
<path d="M22.18 126.51 L22.18 127.49 L20.64 128.05 L20.37 128.70 L21.07 130.17 L20.37 130.87 L18.90 130.17 L18.25 130.44 L17.69 131.98 L16.71 131.98 L16.15 130.44 L15.50 130.17 L14.03 130.87 L13.33 130.17 L14.03 128.70 L13.76 128.05 L12.22 127.49 L12.22 126.51 L13.76 125.95 L14.03 125.30 L13.33 123.83 L14.03 123.13 L15.50 123.83 L16.15 123.56 L16.71 122.02 L17.69 122.02 L18.25 123.56 L18.90 123.83 L20.37 123.13 L21.07 123.83 L20.37 125.30 L20.64 125.95 Z"/><circle cx="17.2" cy="127" r="1.2" fill="#5a5a5a"/><path d="M30.98 130.02 L30.98 131.18 L28.85 131.86 L28.59 132.67 L29.91 134.47 L29.23 135.41 L27.11 134.71 L26.42 135.20 L26.43 137.44 L25.33 137.80 L24.02 135.98 L23.18 135.98 L21.87 137.80 L20.77 137.44 L20.78 135.20 L20.09 134.71 L17.97 135.41 L17.29 134.47 L18.61 132.67 L18.35 131.86 L16.22 131.18 L16.22 130.02 L18.35 129.34 L18.61 128.53 L17.29 126.73 L17.97 125.79 L20.09 126.49 L20.78 126.00 L20.77 123.76 L21.87 123.40 L23.18 125.22 L24.02 125.22 L25.33 123.40 L26.43 123.76 L26.42 126.00 L27.11 126.49 L29.23 125.79 L29.91 126.73 L28.59 128.53 L28.85 129.34 Z"/><circle cx="23.6" cy="130.6" r="2.2" fill="#5a5a5a"/>
</g>
<path d="M32.8 127 L38.2 127 L35.5 130.2 Z" fill="#fff"/>
<!-- bookmark + arrow icon -->
<g>
<rect x="170.8" y="121" width="12" height="15.4" fill="#f4f8fc" stroke="#3a86d2" stroke-width="1.2"/>
<path d="M172 119.8 H176.2 V128.4 L174.1 126.6 L172 128.4 Z" fill="#2a6fc0"/>
<path d="M177.6 124 H181.4 M177.6 126.4 H181.4 M173 130.4 H181.4 M173 132.8 H181.4" stroke="#9cc4ea" stroke-width="0.9"/>
<path d="M184 127.2 H186.6 V124.6 L190.4 128.4 L186.6 132.2 V129.6 H184 Z" fill="#4a96dc"/>
</g>
<!-- tree plus box -->
<rect x="17.5" y="150.5" width="8" height="8" fill="#fff" stroke="#8c8c8c" stroke-width="1"/>
<path d="M19.4 154.5 H23.6 M21.5 152.4 V156.6" stroke="#000" stroke-width="1.1"/>
<path d="M26 154.5 H31" stroke="#b4b4b4" stroke-width="1"/>
<!-- tree bookmark icon -->
<g>
<rect x="31.6" y="149.4" width="11" height="13.2" fill="#f6fafd" stroke="#2f7ccc" stroke-width="1.2"/>
<path d="M33.2 147.8 H36.8 V156 L35 154.6 L33.2 156 Z" fill="#2a6fc0"/>
<path d="M37.8 152 H41 M37.8 154 H41 M33.6 158 H41 M33.6 160 H41" stroke="#a4c8ec" stroke-width="0.8"/>
</g>
</g>
<g id="sbarrows" fill="none" stroke="#55555c" stroke-width="1.7" stroke-linejoin="miter">
<path d="M1336 40.2 L1339.4 36.6 L1342.8 40.2"/>
<path d="M1319.1 78.2 L1322.5 74.6 L1325.9 78.2"/>
<path d="M1336 616.8 L1339.4 620.4 L1342.8 616.8"/>
<path d="M1320.8 632.2 L1324.4 635.6 L1320.8 639"/>
<path d="M11.8 632.2 L8.2 635.6 L11.8 639"/>
</g>
<g fill="#a4a4a4">
<rect x="1346" y="659" width="2" height="2"/>
<rect x="1343" y="662" width="2" height="2"/><rect x="1346" y="662" width="2" height="2"/>
<rect x="1340" y="665" width="2" height="2"/><rect x="1343" y="665" width="2" height="2"/><rect x="1346" y="665" width="2" height="2"/>
</g>

<g stroke="#000" fill="none" stroke-linecap="butt">
<line x1="205.0" y1="103.3" x2="1276.5" y2="103.3" stroke-width="1.3"/>
<line x1="1275.8" y1="103.3" x2="1275.8" y2="628.0" stroke-width="1.15"/>
<line x1="359.3" y1="72.0" x2="359.3" y2="103.3" stroke-width="1.3"/>
<line x1="834.3" y1="72.0" x2="834.3" y2="103.3" stroke-width="1.3"/>
<line x1="1276.0" y1="383.3" x2="1308.0" y2="383.3" stroke-width="1.3"/>
<rect x="905.3" y="170.2" width="81.4" height="410.8" stroke-width="2.1" fill="#f2f3f2"/>
<line x1="764.3" y1="186.1" x2="905.0" y2="186.1" stroke-width="1.9"/>
<line x1="764.3" y1="202.6" x2="905.0" y2="202.6" stroke-width="1.9"/>
<line x1="764.3" y1="219.1" x2="905.0" y2="219.1" stroke-width="1.9"/>
<line x1="764.3" y1="235.5" x2="905.0" y2="235.5" stroke-width="1.9"/>
<line x1="764.3" y1="252.0" x2="905.0" y2="252.0" stroke-width="1.9"/>
<line x1="764.3" y1="268.5" x2="905.0" y2="268.5" stroke-width="1.9"/>
<line x1="764.3" y1="285.0" x2="905.0" y2="285.0" stroke-width="1.9"/>
<line x1="764.3" y1="301.4" x2="905.0" y2="301.4" stroke-width="1.9"/>
<line x1="764.3" y1="317.9" x2="905.0" y2="317.9" stroke-width="1.9"/>
<line x1="764.3" y1="334.4" x2="905.0" y2="334.4" stroke-width="1.9"/>
<line x1="764.3" y1="350.9" x2="905.0" y2="350.9" stroke-width="1.9"/>
<line x1="764.3" y1="367.3" x2="905.0" y2="367.3" stroke-width="1.9"/>
<line x1="764.3" y1="383.8" x2="905.0" y2="383.8" stroke-width="1.9"/>
<line x1="764.3" y1="400.3" x2="905.0" y2="400.3" stroke-width="1.9"/>
<line x1="764.3" y1="416.8" x2="905.0" y2="416.8" stroke-width="1.9"/>
<line x1="764.3" y1="433.2" x2="905.0" y2="433.2" stroke-width="1.9"/>
<line x1="764.3" y1="449.7" x2="905.0" y2="449.7" stroke-width="1.9"/>
<line x1="764.3" y1="466.2" x2="905.0" y2="466.2" stroke-width="1.9"/>
<line x1="764.3" y1="482.7" x2="905.0" y2="482.7" stroke-width="1.9"/>
<line x1="764.3" y1="499.1" x2="905.0" y2="499.1" stroke-width="1.9"/>
<line x1="764.3" y1="515.6" x2="905.0" y2="515.6" stroke-width="1.9"/>
<line x1="764.3" y1="532.1" x2="905.0" y2="532.1" stroke-width="1.9"/>
<line x1="764.3" y1="548.6" x2="905.0" y2="548.6" stroke-width="1.9"/>
<line x1="854.8" y1="565.0" x2="905.0" y2="565.0" stroke-width="1.9"/>
<line x1="854.8" y1="556.2" x2="854.8" y2="574.3" stroke-width="1.9"/>
<line x1="987.0" y1="252.0" x2="1128.0" y2="252.0" stroke-width="1.9"/>
<line x1="987.0" y1="268.5" x2="1128.0" y2="268.5" stroke-width="1.9"/>
<line x1="987.0" y1="285.0" x2="1128.0" y2="285.0" stroke-width="1.9"/>
<line x1="987.0" y1="301.4" x2="1128.0" y2="301.4" stroke-width="1.9"/>
<line x1="987.0" y1="317.9" x2="1128.0" y2="317.9" stroke-width="1.9"/>
<line x1="987.0" y1="334.4" x2="1128.0" y2="334.4" stroke-width="1.9"/>
<line x1="987.0" y1="350.9" x2="1128.0" y2="350.9" stroke-width="1.9"/>
<line x1="987.0" y1="367.3" x2="1128.0" y2="367.3" stroke-width="1.9"/>
<line x1="987.0" y1="383.8" x2="1128.0" y2="383.8" stroke-width="1.9"/>
<line x1="987.0" y1="400.3" x2="1128.0" y2="400.3" stroke-width="1.9"/>
<line x1="987.0" y1="416.8" x2="1128.0" y2="416.8" stroke-width="1.9"/>
<line x1="987.0" y1="433.2" x2="1128.0" y2="433.2" stroke-width="1.9"/>
<line x1="987.0" y1="449.7" x2="1128.0" y2="449.7" stroke-width="1.9"/>
<line x1="987.0" y1="466.2" x2="1128.0" y2="466.2" stroke-width="1.9"/>
<line x1="987.0" y1="499.1" x2="1128.0" y2="499.1" stroke-width="1.9"/>
<line x1="987.0" y1="186.1" x2="1053.0" y2="186.1" stroke-width="1.9"/>
<line x1="987.0" y1="202.6" x2="1037.3" y2="202.6" stroke-width="1.9"/>
<line x1="1036.5" y1="202.6" x2="1036.5" y2="186.1" stroke-width="1.9"/>
<line x1="1053.0" y1="177.5" x2="1053.0" y2="195.7" stroke-width="1.9"/>
<line x1="987.0" y1="219.1" x2="1053.0" y2="219.1" stroke-width="1.9"/>
<line x1="987.0" y1="235.5" x2="1037.3" y2="235.5" stroke-width="1.9"/>
<line x1="1036.5" y1="235.5" x2="1036.5" y2="219.1" stroke-width="1.9"/>
<line x1="1053.0" y1="202.2" x2="1053.0" y2="236.8" stroke-width="1.9"/>
<line x1="1058.0" y1="207.2" x2="1058.0" y2="231.8" stroke-width="1.9"/>
<line x1="1063.0" y1="212.3" x2="1063.0" y2="226.7" stroke-width="1.9"/>
<line x1="1068.0" y1="217.0" x2="1068.0" y2="222.0" stroke-width="1.9"/>
<line x1="987.0" y1="482.7" x2="1053.0" y2="482.7" stroke-width="1.9"/>
<line x1="1053.0" y1="474.1" x2="1053.0" y2="487.3" stroke-width="1.9"/>
<line x1="987.0" y1="515.6" x2="1046.0" y2="515.6" stroke-width="1.9"/>
<line x1="987.0" y1="532.1" x2="1061.0" y2="532.1" stroke-width="1.9"/>
<line x1="987.0" y1="548.6" x2="1046.0" y2="548.6" stroke-width="1.9"/>
<line x1="1045.2" y1="515.6" x2="1045.2" y2="548.6" stroke-width="1.9"/>
<line x1="1061.0" y1="515.9" x2="1061.0" y2="549.1" stroke-width="1.9"/>
<line x1="1066.0" y1="520.2" x2="1066.0" y2="544.8" stroke-width="1.9"/>
<line x1="1071.0" y1="525.3" x2="1071.0" y2="539.7" stroke-width="1.9"/>
<line x1="1076.0" y1="530.0" x2="1076.0" y2="535.0" stroke-width="1.9"/>
<line x1="450.2" y1="432.6" x2="500.0" y2="432.6" stroke-width="1.9"/>
<line x1="533.0" y1="432.6" x2="624.0" y2="432.6" stroke-width="1.9"/>
<path d="M500.3 416.6 L500.3 449.2 L533 432.6 Z" stroke-width="1.7" stroke-linejoin="miter"/>
<line x1="533.2" y1="416.2" x2="533.2" y2="449.8" stroke-width="1.9"/>
<line x1="450.2" y1="415.7" x2="450.2" y2="450.3" stroke-width="1.9"/>
<line x1="445.2" y1="420.7" x2="445.2" y2="445.3" stroke-width="1.9"/>
<line x1="440.2" y1="425.8" x2="440.2" y2="440.2" stroke-width="1.9"/>
<line x1="435.2" y1="430.5" x2="435.2" y2="435.5" stroke-width="1.9"/>
<line x1="450.2" y1="499.0" x2="500.0" y2="499.0" stroke-width="1.9"/>
<line x1="533.0" y1="499.0" x2="624.0" y2="499.0" stroke-width="1.9"/>
<path d="M500.3 483.0 L500.3 515.6 L533 499.0 Z" stroke-width="1.7" stroke-linejoin="miter"/>
<line x1="533.2" y1="482.6" x2="533.2" y2="516.2" stroke-width="1.9"/>
<line x1="450.2" y1="482.1" x2="450.2" y2="516.7" stroke-width="1.9"/>
<line x1="445.2" y1="487.1" x2="445.2" y2="511.7" stroke-width="1.9"/>
<line x1="440.2" y1="492.2" x2="440.2" y2="506.6" stroke-width="1.9"/>
<line x1="435.2" y1="496.9" x2="435.2" y2="501.9" stroke-width="1.9"/>
<line x1="205.0" y1="260.2" x2="237.0" y2="260.2" stroke-width="1.9"/>
<line x1="205.0" y1="285.1" x2="220.3" y2="285.1" stroke-width="1.9"/>
<line x1="220.3" y1="267.8" x2="220.3" y2="302.4" stroke-width="1.9"/>
<line x1="225.3" y1="272.8" x2="225.3" y2="297.4" stroke-width="1.9"/>
<line x1="230.3" y1="277.9" x2="230.3" y2="292.3" stroke-width="1.9"/>
<line x1="235.3" y1="282.6" x2="235.3" y2="287.6" stroke-width="1.9"/>
<line x1="209.8" y1="340.4" x2="209.8" y2="345.6" stroke-width="1.9"/>
<line x1="209.8" y1="389.6" x2="209.8" y2="394.8" stroke-width="1.9"/>
</g>
<g fill="#000" stroke="none">
<circle cx="1036.5" cy="186.1" r="3.9"/>
<circle cx="1036.5" cy="219.1" r="3.9"/>
<circle cx="1045.2" cy="532.1" r="3.9"/>
</g>
<g font-family="'Liberation Serif',serif" font-size="14.8" fill="#0a0a14">
<text x="594.0" y="92.0" text-anchor="middle">3</text>
<text x="1068.0" y="92.0" text-anchor="middle">4</text>
<text x="1291.5" y="232.3" text-anchor="middle">A</text>
<text x="1292.0" y="545.3" text-anchor="middle">B</text>
<text x="905.0" y="166.6">J6</text>
<text x="896.3" y="602.6">FPC-45P-0.5mm</text>
<text x="772.8" y="182.8">FMC_NE1</text>
<text x="772.8" y="199.3">FMC_A18</text>
<text x="772.8" y="215.8">FMC_NWE</text>
<text x="772.8" y="232.2">FMC_NOE</text>
<text x="772.8" y="248.7">STM_NRST</text>
<text x="772.8" y="265.2">FMC_D0</text>
<text x="772.8" y="281.7">FMC_D1</text>
<text x="772.8" y="298.1">FMC_D2</text>
<text x="772.8" y="314.6">FMC_D3</text>
<text x="772.8" y="331.1">FMC_D4</text>
<text x="772.8" y="347.6">FMC_D5</text>
<text x="772.8" y="364.0">FMC_D6</text>
<text x="772.8" y="380.5">FMC_D7</text>
<text x="772.8" y="397.0">FMC_D8</text>
<text x="772.8" y="413.5">FMC_D9</text>
<text x="772.8" y="429.9">FMC_D10</text>
<text x="772.8" y="446.4">FMC_D11</text>
<text x="772.8" y="462.9">FMC_D12</text>
<text x="772.8" y="479.4">FMC_D13</text>
<text x="772.8" y="495.8">FMC_D14</text>
<text x="772.8" y="512.3">FMC_D15</text>
<text x="772.8" y="528.8">PWR_ON</text>
<text x="772.8" y="545.3">PWR_HOLD</text>
<text x="892.0" y="182.8" text-anchor="end">1</text>
<text x="915.7" y="190.9">CS</text>
<text x="892.0" y="199.3" text-anchor="end">2</text>
<text x="915.7" y="207.4">RS</text>
<text x="892.0" y="215.8" text-anchor="end">3</text>
<text x="915.7" y="223.9">WR</text>
<text x="892.0" y="232.2" text-anchor="end">4</text>
<text x="915.7" y="240.3">RD</text>
<text x="892.0" y="248.7" text-anchor="end">5</text>
<text x="915.7" y="256.8">RST</text>
<text x="892.0" y="265.2" text-anchor="end">6</text>
<text x="915.7" y="273.3">DB0</text>
<text x="892.0" y="281.7" text-anchor="end">7</text>
<text x="915.7" y="289.8">DB1</text>
<text x="892.0" y="298.1" text-anchor="end">8</text>
<text x="915.7" y="306.2">DB2</text>
<text x="892.0" y="314.6" text-anchor="end">9</text>
<text x="915.7" y="322.7">DB3</text>
<text x="892.0" y="331.1" text-anchor="end">10</text>
<text x="915.7" y="339.2">DB4</text>
<text x="892.0" y="347.6" text-anchor="end">11</text>
<text x="915.7" y="355.7">DB5</text>
<text x="892.0" y="364.0" text-anchor="end">12</text>
<text x="915.7" y="372.1">DB6</text>
<text x="892.0" y="380.5" text-anchor="end">13</text>
<text x="915.7" y="388.6">DB7</text>
<text x="892.0" y="397.0" text-anchor="end">14</text>
<text x="915.7" y="405.1">DB8</text>
<text x="892.0" y="413.5" text-anchor="end">15</text>
<text x="915.7" y="421.6">DB9</text>
<text x="892.0" y="429.9" text-anchor="end">16</text>
<text x="915.7" y="438.0">DB10</text>
<text x="892.0" y="446.4" text-anchor="end">17</text>
<text x="915.7" y="454.5">DB11</text>
<text x="892.0" y="462.9" text-anchor="end">18</text>
<text x="915.7" y="471.0">DB12</text>
<text x="892.0" y="479.4" text-anchor="end">19</text>
<text x="915.7" y="487.5">DB13</text>
<text x="892.0" y="495.8" text-anchor="end">20</text>
<text x="915.7" y="503.9">DB14</text>
<text x="892.0" y="512.3" text-anchor="end">21</text>
<text x="915.7" y="520.4">DB15</text>
<text x="892.0" y="528.8" text-anchor="end">22</text>
<text x="915.7" y="536.9">PON</text>
<text x="892.0" y="545.3" text-anchor="end">23</text>
<text x="915.7" y="553.4">PHO</text>
<text x="892.0" y="561.7" text-anchor="end">24</text>
<text x="915.7" y="569.8">3v3</text>
<text x="976.6" y="190.9" text-anchor="end">3v3</text>
<text x="976.6" y="207.4" text-anchor="end">3v3</text>
<text x="976.6" y="223.9" text-anchor="end">GND</text>
<text x="976.6" y="240.3" text-anchor="end">GND</text>
<text x="976.6" y="256.8" text-anchor="end">MISO</text>
<text x="976.6" y="273.3" text-anchor="end">MOSI</text>
<text x="976.6" y="289.8" text-anchor="end">WRX</text>
<text x="976.6" y="306.2" text-anchor="end">WTX</text>
<text x="976.6" y="322.7" text-anchor="end">CLK</text>
<text x="976.6" y="339.2" text-anchor="end">SDCS</text>
<text x="976.6" y="355.7" text-anchor="end">AD1C</text>
<text x="976.6" y="372.1" text-anchor="end">AD2C</text>
<text x="976.6" y="388.6" text-anchor="end">E2A</text>
<text x="976.6" y="405.1" text-anchor="end">E2B</text>
<text x="976.6" y="421.6" text-anchor="end">E2S</text>
<text x="976.6" y="438.0" text-anchor="end">E1A</text>
<text x="976.6" y="454.5" text-anchor="end">E1B</text>
<text x="976.6" y="471.0" text-anchor="end">AD3C</text>
<text x="976.6" y="487.5" text-anchor="end">5v</text>
<text x="976.6" y="503.9" text-anchor="end">SC</text>
<text x="976.6" y="520.4" text-anchor="end">GND</text>
<text x="976.6" y="536.9" text-anchor="end">CAS</text>
<text x="976.6" y="553.4" text-anchor="end">CAS</text>
<text x="1000.6" y="182.8">25</text>
<text x="1000.6" y="199.3">26</text>
<text x="1000.6" y="215.8">27</text>
<text x="1000.6" y="232.2">28</text>
<text x="1000.6" y="248.7">29</text>
<text x="1000.6" y="265.2">30</text>
<text x="1000.6" y="281.7">31</text>
<text x="1000.6" y="298.1">32</text>
<text x="1000.6" y="314.6">33</text>
<text x="1000.6" y="331.1">34</text>
<text x="1000.6" y="347.6">35</text>
<text x="1000.6" y="364.0">36</text>
<text x="1000.6" y="380.5">37</text>
<text x="1000.6" y="397.0">38</text>
<text x="1000.6" y="413.5">39</text>
<text x="1000.6" y="429.9">40</text>
<text x="1000.6" y="446.4">41</text>
<text x="1000.6" y="462.9">42</text>
<text x="1000.6" y="479.4">43</text>
<text x="1000.6" y="495.8">44</text>
<text x="1000.6" y="512.3">45</text>
<text x="1000.6" y="528.8">46</text>
<text x="1000.6" y="545.3">47</text>
<text x="1036.0" y="248.7">PERI_MISO</text>
<text x="1036.0" y="265.2">PERI_MOSI</text>
<text x="1036.0" y="281.7">ESP_1_TX</text>
<text x="1036.0" y="298.1">ESP_1_RX</text>
<text x="1036.0" y="314.6">PERI_SCK</text>
<text x="1036.0" y="331.1">SD_CS</text>
<text x="1036.0" y="347.6">AD1_CS</text>
<text x="1036.0" y="364.0">AD2_CS</text>
<text x="1036.0" y="380.5">ENC2_DT</text>
<text x="1036.0" y="397.0">ENC2_CLK</text>
<text x="1036.0" y="413.5">ENC2_SW</text>
<text x="1036.0" y="429.9">ENC_DT</text>
<text x="1036.0" y="446.4">ENC_CLK</text>
<text x="1036.0" y="462.9">AD3_CS</text>
<text x="1036.0" y="495.8">DCDC_SYNC</text>
<text x="1056.4" y="190.6">+3V3</text>
<text x="1073.0" y="223.2">GND</text>
<text x="1056.4" y="486.8">+5</text>
<text x="1081.5" y="536.6">GND</text>
<text x="818.9" y="569.8">+3V3</text>
<text x="498.8" y="411.8">D1</text>
<text x="498.8" y="477.6">D3</text>
<text x="498.8" y="464.5">SMAJ5.0A-TR</text>
<text x="498.8" y="529.7">SMAJ5.0A-TR</text>
<text x="566.0" y="430.0">PWR_ON</text>
<text x="566.0" y="495.6">PWR_HOLD</text>
<text x="399.0" y="437.9">GND</text>
<text x="399.0" y="503.5">GND</text>
<text x="203.8" y="256.5">ACKW</text>
<text x="239.4" y="289.8">GND</text>
<text x="215.4" y="347.7">GND</text>
<text x="215.4" y="396.7">GND</text>
<text x="203.3" y="372.5">R</text>
<text x="203.3" y="422.5">R</text>
</g>
<rect x="201" y="66.5" width="5" height="560.5" fill="#303030"/>
<g fill="#9c9c9c"><rect x="202" y="366" width="1" height="1"/><rect x="202" y="368" width="1" height="1"/><rect x="202" y="370" width="1" height="1"/><rect x="202" y="372" width="1" height="1"/><rect x="202" y="374" width="1" height="1"/><rect x="202" y="376" width="1" height="1"/><rect x="202" y="378" width="1" height="1"/><rect x="202" y="380" width="1" height="1"/><rect x="202" y="382" width="1" height="1"/><rect x="202" y="384" width="1" height="1"/><rect x="202" y="386" width="1" height="1"/><rect x="202" y="388" width="1" height="1"/><rect x="202" y="390" width="1" height="1"/><rect x="202" y="392" width="1" height="1"/><rect x="202" y="394" width="1" height="1"/><rect x="202" y="396" width="1" height="1"/><rect x="202" y="398" width="1" height="1"/><rect x="202" y="400" width="1" height="1"/><rect x="202" y="402" width="1" height="1"/><rect x="202" y="404" width="1" height="1"/><rect x="202" y="406" width="1" height="1"/><rect x="202" y="408" width="1" height="1"/><rect x="202" y="410" width="1" height="1"/><rect x="202" y="412" width="1" height="1"/><rect x="204" y="366" width="1" height="1"/><rect x="204" y="368" width="1" height="1"/><rect x="204" y="370" width="1" height="1"/><rect x="204" y="372" width="1" height="1"/><rect x="204" y="374" width="1" height="1"/><rect x="204" y="376" width="1" height="1"/><rect x="204" y="378" width="1" height="1"/><rect x="204" y="380" width="1" height="1"/><rect x="204" y="382" width="1" height="1"/><rect x="204" y="384" width="1" height="1"/><rect x="204" y="386" width="1" height="1"/><rect x="204" y="388" width="1" height="1"/><rect x="204" y="390" width="1" height="1"/><rect x="204" y="392" width="1" height="1"/><rect x="204" y="394" width="1" height="1"/><rect x="204" y="396" width="1" height="1"/><rect x="204" y="398" width="1" height="1"/><rect x="204" y="400" width="1" height="1"/><rect x="204" y="402" width="1" height="1"/><rect x="204" y="404" width="1" height="1"/><rect x="204" y="406" width="1" height="1"/><rect x="204" y="408" width="1" height="1"/><rect x="204" y="410" width="1" height="1"/><rect x="204" y="412" width="1" height="1"/></g>
<path transform="translate(1160,292.7)" d="M0.5 0.5 L0.5 16.7 L4.1 13.5 L6.9 18.4 L9.5 17.5 L7.6 12.7 L11.7 12.2 Z" fill="#fdfdfb" stroke="#14141e" stroke-width="1" stroke-linejoin="miter"/>
<path transform="translate(1173,562.7)" d="M0.5 0.5 L0.5 16.7 L4.1 13.5 L6.9 18.4 L9.5 17.5 L7.6 12.7 L11.7 12.2 Z" fill="#fdfdfb" stroke="#14141e" stroke-width="1" stroke-linejoin="miter"/>
</svg>
</body>
</html>
